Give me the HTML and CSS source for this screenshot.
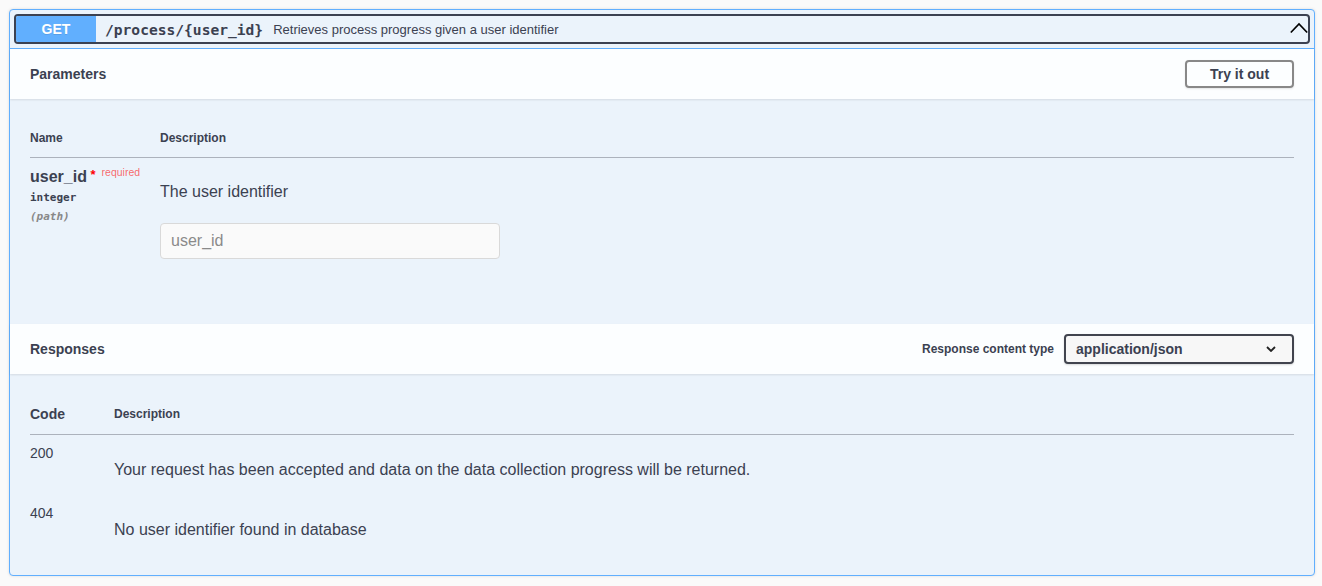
FILE: index.html
```html
<!DOCTYPE html>
<html lang="en">
<head>
<meta charset="utf-8">
<title>GET /process/{user_id}</title>
<link rel="stylesheet" href="styles.css">
</head>
<body>
<div class="page">
  <div class="opblock">
    <div class="summary-wrap">
      <div class="summary">
        <span class="method">GET</span>
        <span class="path">/process/{user_id}</span>
        <span class="summary-desc">Retrieves process progress given a user identifier</span>
        <svg class="arrow" width="18" height="12" viewBox="0 0 18 12"><polyline points="0.8,10.5 9,2 17.2,10.5" fill="none" stroke="#000" stroke-width="1.7"/></svg>
      </div>
    </div>

    <div class="section-header">
      <h4 class="section-title">Parameters</h4>
      <button class="btn">Try it out</button>
    </div>

    <div class="params-body">
      <table class="ptable">
        <thead>
          <tr><th class="col-name">Name</th><th>Description</th></tr>
        </thead>
        <tbody>
          <tr>
            <td class="col-name">
              <div class="param-name">user_id<span class="star">&nbsp;*</span><span class="req">required</span></div>
              <div class="param-type">integer</div>
              <div class="param-in">(path)</div>
            </td>
            <td>
              <p class="md">The user identifier</p>
              <input class="text-input" type="text" placeholder="user_id">
            </td>
          </tr>
        </tbody>
      </table>
    </div>

    <div class="section-header">
      <h4 class="section-title">Responses</h4>
      <div class="ctype">
        <span class="ctype-label">Response content type</span>
        <div class="select">
          <span>application/json</span>
          <svg width="10" height="6" viewBox="0 0 10 6"><polyline points="1,1 5,5 9,1" fill="none" stroke="#222" stroke-width="1.8"/></svg>
        </div>
      </div>
    </div>

    <div class="resp-body">
      <table class="rtable">
        <thead>
          <tr><th class="col-code">Code</th><th class="col-desc">Description</th></tr>
        </thead>
        <tbody>
          <tr>
            <td class="code">200</td>
            <td><p class="md">Your request has been accepted and data on the data collection progress will be returned.</p></td>
          </tr>
          <tr>
            <td class="code">404</td>
            <td><p class="md">No user identifier found in database</p></td>
          </tr>
        </tbody>
      </table>
    </div>
  </div>
</div>
</body>
</html>
```
FILE: styles.css
```css
html, body {
  margin: 0;
  background: #fafafa;
}
body {
  font-family: "Liberation Sans", Arial, sans-serif;
  color: #3b4151;
}
.page {
  padding: 9px 7px 10px 9px;
}
.opblock {
  width: 1306px;
  box-sizing: border-box;
  border: 1px solid #61affe;
  border-radius: 4px;
  background: #ebf3fb;
  box-shadow: 0 0 3px rgba(0, 0, 0, 0.12);
}
.summary-wrap {
  padding: 4px;
  border-bottom: 1px solid #61affe;
}
.summary {
  display: flex;
  align-items: center;
  height: 30px;
  box-sizing: border-box;
  border: 2px solid #3b4151;
  border-radius: 4px;
}
.method {
  align-self: stretch;
  width: 80px;
  display: flex;
  align-items: center;
  justify-content: center;
  background: #61affe;
  color: #fff;
  font-weight: 700;
  font-size: 14px;
  border-radius: 2px 0 0 2px;
  text-shadow: 0 1px 0 rgba(0, 0, 0, 0.1);
}
.path {
  margin-left: 9px;
  font-family: "DejaVu Sans Mono", "Liberation Mono", monospace;
  font-weight: 700;
  font-size: 14.6px;
  color: #3b4151;
}
.summary-desc {
  flex: 1;
  margin-left: 10px;
  font-size: 13px;
  color: #3b4151;
}
.arrow {
  margin-right: 0;
  margin-top: -2px;
}
.section-header {
  position: relative;
  z-index: 1;
  display: flex;
  align-items: center;
  justify-content: space-between;
  height: 50px;
  padding: 0 20px;
  background: rgba(255, 255, 255, 0.85);
  box-shadow: 0 1px 2px rgba(0, 0, 0, 0.1);
}
.section-title {
  margin: 0;
  font-size: 14px;
  font-weight: 700;
  color: #3b4151;
}
.btn {
  width: 109px;
  height: 28px;
  box-sizing: border-box;
  border: 2px solid #888;
  border-radius: 4px;
  background: transparent;
  font-family: "Liberation Sans", Arial, sans-serif;
  font-weight: 700;
  font-size: 14px;
  color: #3b4151;
  padding: 0;
  box-shadow: 0 1px 2px rgba(0, 0, 0, 0.1);
}
.params-body {
  padding: 20px 20px 50px;
}
.resp-body {
  padding: 20px;
}
table {
  width: 100%;
  border-collapse: collapse;
}
th {
  text-align: left;
  padding: 12px 0;
  font-size: 12px;
  line-height: 14px;
  font-weight: 700;
  color: #3b4151;
  border-bottom: 1px solid rgba(59, 65, 81, 0.2);
}
td {
  padding: 10px 0;
  vertical-align: top;
}
.col-name {
  width: 130px;
}
.param-name {
  font-size: 16px;
  line-height: 18px;
  font-weight: 700;
  color: #3b4151;
  white-space: nowrap;
}
.star {
  color: #f00;
  font-size: 13px;
  line-height: 0;
  vertical-align: 3px;
}
.req {
  font-size: 10.5px;
  font-weight: 400;
  line-height: 0;
  color: rgba(255, 0, 0, 0.6);
  padding-left: 6px;
  vertical-align: 6px;
}
.param-type {
  padding: 5px 0;
  font-family: "DejaVu Sans Mono", "Liberation Mono", monospace;
  font-size: 11px;
  line-height: 14px;
  font-weight: 700;
  color: #3b4151;
}
.param-in {
  font-family: "DejaVu Sans Mono", "Liberation Mono", monospace;
  font-size: 11px;
  line-height: 14px;
  font-style: italic;
  font-weight: 700;
  color: #888;
}
.md {
  margin: 15px 0 6px;
  font-size: 16px;
  line-height: 18px;
  color: #3b4151;
}
.text-input {
  display: block;
  width: 340px;
  height: 36px;
  box-sizing: border-box;
  margin: 22px 0 5px;
  padding: 8px 10px;
  border: 1px solid #d9d9d9;
  border-radius: 4px;
  background: #fafafa;
  font-family: "Liberation Sans", Arial, sans-serif;
  font-size: 16px;
  color: #3b4151;
}
.text-input::placeholder {
  color: #8a8a8a;
}
.ctype {
  display: flex;
  align-items: center;
  gap: 10px;
}
.ctype-label {
  font-size: 12px;
  font-weight: 700;
  color: #3b4151;
}
.select {
  width: 230px;
  height: 30px;
  box-sizing: border-box;
  display: flex;
  align-items: center;
  justify-content: space-between;
  padding: 0 16px 0 10px;
  border: 2px solid #41444e;
  border-radius: 4px;
  background: #f7f7f7;
  font-size: 14px;
  font-weight: 700;
  color: #3b4151;
  box-shadow: 0 1px 2px rgba(0, 0, 0, 0.15);
}
.col-code {
  width: 84px;
  font-size: 14px;
  line-height: 16px;
}
.code {
  font-size: 14px;
  line-height: 16px;
  color: #3b4151;
}
.rtable .md {
  margin: 16px 0 6px;
}
```
